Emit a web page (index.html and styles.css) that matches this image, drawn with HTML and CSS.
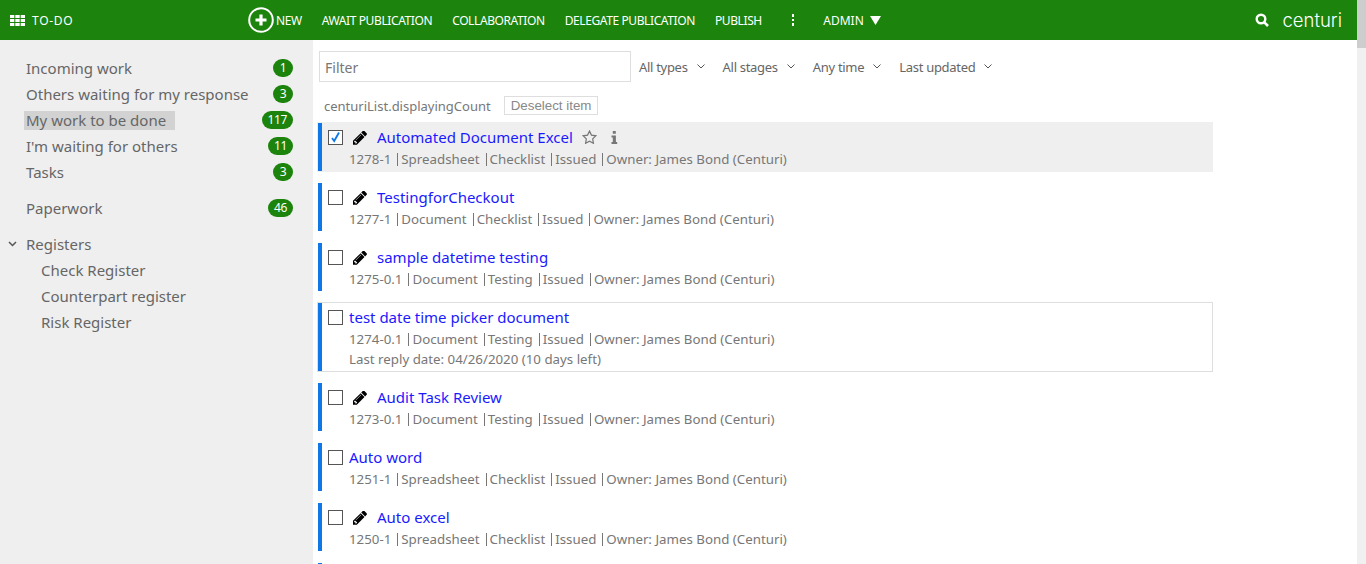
FILE: index.html
```html
<!DOCTYPE html>
<html>
<head>
<title>To-do</title>
<link rel="stylesheet" href="styles.css">
</head>
<body>
<svg class="defs" width="0" height="0">
    <symbol id="pencil" viewBox="128 224 1520 1440"><path d="M491 1536l91-91-235-235-91 91v107h128v128h107zm523-928q0-22-22-22-10 0-17 7l-542 542q-7 7-7 17 0 22 22 22 10 0 17-7l542-542q7-7 7-17zm-54-192l416 416-832 832h-416v-416zm683 96q0 53-37 90l-166 166-416-416 165-164q36-38 90-38 53 0 91 38l235 234q37 39 37 91z"/></symbol>
</svg>
<div id="page">
    <div id="topbar">
        <div class="brand">
            <svg class="grid-icon" width="15" height="11" viewBox="0 0 15 11"><path d="M0 0h4.300v3H0zM5.300 0h4.400v3H5.300zM10.700 0H15v3h-4.300zM0 4h4.300v3H0zM5.300 4h4.400v3H5.300zM10.700 4H15v3h-4.300zM0 8h4.300v3H0zM5.300 8h4.400v3H5.300zM10.700 8H15v3h-4.300z"/></svg>
            <span>TO-DO</span>
        </div>
        <div class="menu">
            <a class="new">
                <svg width="26" height="26" viewBox="0 0 26 26"><circle cx="13" cy="13" r="11.800" fill="none" stroke="#fff" stroke-width="2"/><path d="M13 7.500v11M7.500 13h11" stroke="#fff" stroke-width="3.200"/></svg>
                NEW
            </a>
            <a>AWAIT PUBLICATION</a>
            <a>COLLABORATION</a>
            <a>DELEGATE PUBLICATION</a>
            <a>PUBLISH</a>
            <a class="dots"><i></i><i></i><i></i></a>
            <a class="admin">ADMIN <svg width="11" height="9" viewBox="0 0 11 9"><path d="M0 0h11L5.500 9z" fill="#fff"/></svg></a>
        </div>
        <div class="right">
            <svg width="14" height="14" viewBox="0 0 14 14"><circle cx="6" cy="6" r="4.300" fill="none" stroke="#fff" stroke-width="2.400"/><path d="M9.300 9.300l3.700 3.700" stroke="#fff" stroke-width="2.600"/></svg>
            <span class="logo">centuri</span>
        </div>
    </div>
    <div id="main">
        <div id="sidebar">
            <div class="nav-row"><span class="nav-label">Incoming work</span><span class="count">1</span></div>
            <div class="nav-row"><span class="nav-label">Others waiting for my response</span><span class="count">3</span></div>
            <div class="nav-row"><span class="nav-label active">My work to be done</span><span class="count">117</span></div>
            <div class="nav-row"><span class="nav-label">I'm waiting for others</span><span class="count">11</span></div>
            <div class="nav-row"><span class="nav-label">Tasks</span><span class="count">3</span></div>
            <div class="nav-row spaced"><span class="nav-label">Paperwork</span><span class="count">46</span></div>
            <div class="nav-row spaced">
                <svg class="twisty" width="9" height="6" viewBox="0 0 9 6"><path d="M1 1l3.500 3.500L8 1" fill="none" stroke="#555" stroke-width="1.500"/></svg>
                <span class="nav-label">Registers</span>
            </div>
            <div class="nav-row sub"><span class="nav-label">Check Register</span></div>
            <div class="nav-row sub"><span class="nav-label">Counterpart register</span></div>
            <div class="nav-row sub"><span class="nav-label">Risk Register</span></div>
        </div>
        <div id="content">
            <div class="filters">
                <input class="filter-input" type="text" placeholder="Filter">
                <div class="drop">All types<svg width="8" height="5" viewBox="0 0 8 5"><path d="M.5.500L4 4 7.500.500" fill="none" stroke="#555"/></svg></div>
                <div class="drop">All stages<svg width="8" height="5" viewBox="0 0 8 5"><path d="M.5.500L4 4 7.500.500" fill="none" stroke="#555"/></svg></div>
                <div class="drop">Any time<svg width="8" height="5" viewBox="0 0 8 5"><path d="M.5.500L4 4 7.500.500" fill="none" stroke="#555"/></svg></div>
                <div class="drop">Last updated<svg width="8" height="5" viewBox="0 0 8 5"><path d="M.5.500L4 4 7.500.500" fill="none" stroke="#555"/></svg></div>
            </div>
            <div class="countline">
                <span>centuriList.displayingCount</span>
                <span class="deselect">Deselect item</span>
            </div>
            <div class="item selected">
                <div class="title-row">
                    <span class="check on"><svg width="13" height="13" viewBox="0 0 13 13"><path d="M3 7l2.200 3L10 1.500" fill="none" stroke="#0f78e6" stroke-width="1.800"/></svg></span>
                    <svg class="pencil" width="14" height="14"><use href="#pencil"/></svg>
                    <a class="title">Automated Document Excel</a>
                    <svg class="star" width="15" height="14" viewBox="0 0 16 15"><path d="M8 1.200l2.100 4.300 4.700.7-3.400 3.300.8 4.700L8 11.900l-4.200 2.300.8-4.700L1.200 6.200l4.700-.7z" fill="none" stroke="#777" stroke-width="1.300"/></svg>
                    <svg class="info" width="7" height="13" viewBox="0 0 7 13"><path d="M1.800 0h3v2.800h-3zM.5 4.500h4.400v6.400h1.300V13H.5v-2.100h1.300V6.600H.5z" fill="#777"/></svg>
                </div>
                <div class="meta"><span>1278-1</span><span>Spreadsheet</span><span>Checklist</span><span>Issued</span><span>Owner: James Bond (Centuri)</span></div>
            </div>
            <div class="item">
                <div class="title-row">
                    <span class="check"></span>
                    <svg class="pencil" width="14" height="14"><use href="#pencil"/></svg>
                    <a class="title">TestingforCheckout</a>
                </div>
                <div class="meta"><span>1277-1</span><span>Document</span><span>Checklist</span><span>Issued</span><span>Owner: James Bond (Centuri)</span></div>
            </div>
            <div class="item">
                <div class="title-row">
                    <span class="check"></span>
                    <svg class="pencil" width="14" height="14"><use href="#pencil"/></svg>
                    <a class="title">sample datetime testing</a>
                </div>
                <div class="meta"><span>1275-0.1</span><span>Document</span><span>Testing</span><span>Issued</span><span>Owner: James Bond (Centuri)</span></div>
            </div>
            <div class="item boxed">
                <div class="title-row">
                    <span class="check"></span>
                    <a class="title">test date time picker document</a>
                </div>
                <div class="meta"><span>1274-0.1</span><span>Document</span><span>Testing</span><span>Issued</span><span>Owner: James Bond (Centuri)</span></div>
                <div class="reply">Last reply date: 04/26/2020 (10 days left)</div>
            </div>
            <div class="item">
                <div class="title-row">
                    <span class="check"></span>
                    <svg class="pencil" width="14" height="14"><use href="#pencil"/></svg>
                    <a class="title">Audit Task Review</a>
                </div>
                <div class="meta"><span>1273-0.1</span><span>Document</span><span>Testing</span><span>Issued</span><span>Owner: James Bond (Centuri)</span></div>
            </div>
            <div class="item">
                <div class="title-row">
                    <span class="check"></span>
                    <a class="title">Auto word</a>
                </div>
                <div class="meta"><span>1251-1</span><span>Spreadsheet</span><span>Checklist</span><span>Issued</span><span>Owner: James Bond (Centuri)</span></div>
            </div>
            <div class="item">
                <div class="title-row">
                    <span class="check"></span>
                    <svg class="pencil" width="14" height="14"><use href="#pencil"/></svg>
                    <a class="title">Auto excel</a>
                </div>
                <div class="meta"><span>1250-1</span><span>Spreadsheet</span><span>Checklist</span><span>Issued</span><span>Owner: James Bond (Centuri)</span></div>
            </div>
            <div class="item"></div>
        </div>
    </div>
</div>
<div id="scrollbar"><div class="thumb"></div></div>
</body>
</html>
```

FILE: styles.css
```css
*
{
    margin: 0;
    padding: 0;
    box-sizing: border-box;
}
html, body
{
    width: 100%;
    height: 100%;
    overflow: hidden;
    background: #fff;
    font-family: "Noto Sans", "Open Sans", sans-serif;
    color: #666;
}
body
{
    display: flex;
}
.defs
{
    position: absolute;
}
#page
{
    flex: 1;
    min-width: 0;
}
#topbar
{
    height: 40px;
    background: #1c830c;
    color: #fff;
    display: flex;
    align-items: center;
    font-size: 12px;
}
.brand
{
    width: 248px;
    padding-left: 10px;
    display: flex;
    align-items: center;
    gap: 7px;
    letter-spacing: 0.7px;
}
.grid-icon
{
    fill: #fff;
}
.menu
{
    display: flex;
    align-items: center;
    gap: 20px;
    flex: 1;
    letter-spacing: -0.4px;
}
.menu a
{
    display: flex;
    align-items: center;
}
.new
{
    gap: 2px;
}
.dots
{
    flex-direction: column;
    gap: 2px;
    margin: 0 9px 0 10px;
}
.dots i
{
    width: 2.500px;
    height: 2.500px;
    background: #fff;
}
.menu .admin
{
    gap: 6px;
    letter-spacing: 0;
}
.right
{
    display: flex;
    align-items: center;
    gap: 13px;
    padding-right: 15px;
}
.logo
{
    font-family: Inter, sans-serif;
    font-weight: 300;
    font-size: 18.500px;
    line-height: 24px;
}
#main
{
    height: 524px;
    display: flex;
    overflow: hidden;
}
#sidebar
{
    width: 313px;
    flex: none;
    background: #efefef;
    padding: 15px 20px 0 26px;
    font-size: 15px;
}
.nav-row
{
    height: 26px;
    display: flex;
    align-items: center;
    justify-content: space-between;
    position: relative;
}
.nav-row.spaced
{
    margin-top: 10px;
    justify-content: flex-start;
}
.nav-row.spaced .count
{
    margin-left: auto;
}
.nav-row.sub
{
    padding-left: 15px;
}
.nav-label
{
    color: #666;
    white-space: nowrap;
}
.nav-label.active
{
    background: #d2d2d2;
    margin-left: -2px;
    padding: 0 9px 0 2px;
    line-height: 19px;
}
.twisty
{
    position: absolute;
    left: -18px;
    top: 10px;
}
.count
{
    min-width: 20px;
    height: 18px;
    padding: 0 6px;
    border-radius: 9px;
    background: #1c830c;
    color: #fff;
    font-size: 12px;
    letter-spacing: -0.4px;
    line-height: 18px;
    text-align: center;
}
#content
{
    flex: 1;
    padding: 11px 0 0 4px;
    overflow: hidden;
}
.filters
{
    display: flex;
    align-items: center;
    height: 31px;
    font-size: 13px;
    letter-spacing: -0.3px;
    margin-left: 2px;
}
.filter-input
{
    width: 312px;
    height: 31px;
    border: 1px solid #dedede;
    padding: 1px 5px 0;
    font: 14px "Noto Sans", sans-serif;
    margin-right: 8px;
}
.filter-input::placeholder
{
    color: #777;
}
.drop
{
    display: flex;
    align-items: center;
    gap: 9px;
    margin-right: 18px;
}
.countline
{
    height: 19px;
    margin: 14px 0 7px 7px;
    display: flex;
    align-items: center;
    gap: 13px;
    font-size: 13px;
    color: #777;
}
.deselect
{
    border: 1px solid #dedede;
    padding: 0 6px;
    font: 13.333px/17px "Liberation Sans", sans-serif;
    color: #888;
}
.item
{
    width: 896px;
    height: 50px;
    border: 1px solid transparent;
    box-shadow: inset 4px 0 #0f78e6;
    margin-bottom: 10px;
    padding: 4px 0 0 10px;
}
.item.selected
{
    background: #efefef;
}
.item.boxed
{
    height: 70px;
    border-color: #dedede;
}
.title-row
{
    display: flex;
    align-items: center;
    height: 20px;
}
.check
{
    width: 15px;
    height: 15px;
    border: 1px solid #555;
    background: #fff;
    margin: 1px 6px 0 0;
    flex: none;
}
.check svg
{
    display: block;
}
.pencil
{
    margin: 1px 10px 0 4px;
    flex: none;
}
.title
{
    font-size: 15px;
    color: #1a1aff;
}
.star
{
    margin-left: 9px;
}
.info
{
    margin-left: 14px;
}
.meta
{
    display: flex;
    font-size: 13.300px;
    color: #777;
    height: 20px;
    line-height: 20px;
    margin-top: 2px;
    padding-left: 21px;
}
.meta span + span
{
    margin-left: 6px;
    padding-left: 4px;
    position: relative;
}
.meta span + span::before
{
    content: "";
    position: absolute;
    left: 0;
    top: 4px;
    height: 13px;
    border-left: 1px solid #777;
}
.reply
{
    font-size: 13.300px;
    color: #777;
    line-height: 20px;
    padding-left: 21px;
}
#scrollbar
{
    width: 9px;
    flex: none;
    background: #f0f0f0;
}
.thumb
{
    height: 48px;
    background: #cdcdcd;
}
```
